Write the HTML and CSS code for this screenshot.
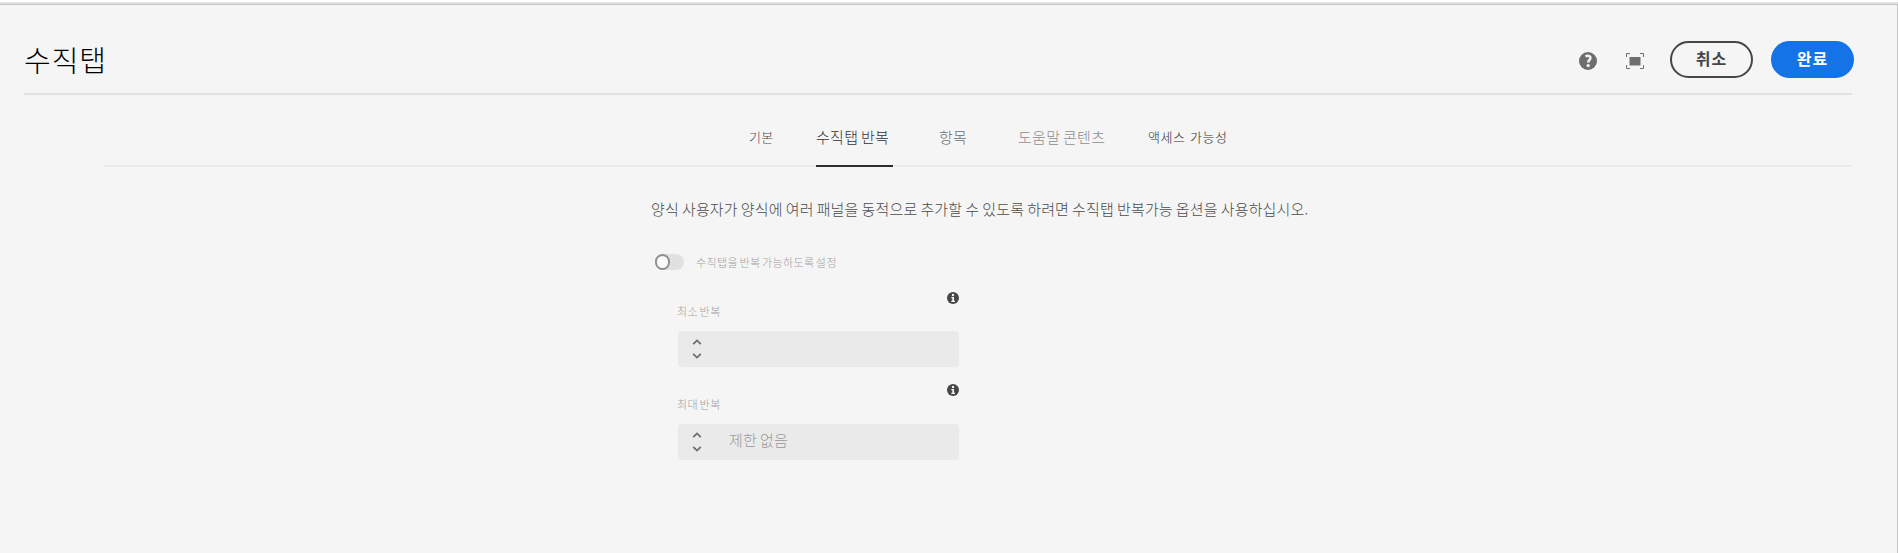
FILE: index.html
```html
<!DOCTYPE html>
<html lang="ko">
<head>
<meta charset="utf-8">
<title>수직탭</title>
<link rel="stylesheet" href="styles.css">
</head>
<body>
<main class="panel">
  <header class="header">
    <h1 class="title">수직탭</h1>
    <div class="actions">
      <svg class="help" width="18" height="18" viewBox="0 0 18 18"><circle cx="9" cy="9" r="9" fill="#6e6e6e"/><path d="M6.500 4.500C8.500 3.200 11.600 3.600 11.400 6.200C11.200 7.900 9.200 8.200 9.200 10.500" fill="none" stroke="#f5f5f5" stroke-width="2.500"/><circle cx="9.200" cy="13.600" r="1.700" fill="#f5f5f5"/></svg>
      <svg class="fullscreen" width="18" height="16" viewBox="0 0 18 16"><rect x="3.500" y="4" width="11" height="8.500" fill="#6e6e6e"/><path d="M.5 4V.5H4M14 .5h3.500V4M.5 12v3.500H4M14 15.500h3.500V12" fill="none" stroke="#6e6e6e"/></svg>
      <button class="button cancel">취소</button>
      <button class="button done">완료</button>
    </div>
  </header>
  <nav class="tabs">
    <a class="tab tab-basic">기본</a>
    <a class="tab tab-repeat">수직탭 반복</a>
    <a class="tab tab-items">항목</a>
    <a class="tab tab-help">도움말 콘텐츠</a>
    <a class="tab tab-access">액세스 가능성</a>
  </nav>
  <section class="content">
    <p class="description">양식 사용자가 양식에 여러 패널을 동적으로 추가할 수 있도록 하려면 수직탭 반복가능 옵션을 사용하십시오.</p>
    <div class="toggle-row"><span class="switch"><span class="knob"></span></span><span class="toggle-label">수직탭을 반복 가능하도록 설정</span></div>
    <div class="field">
      <div class="field-head"><label class="label">최소 반복</label>
        <svg class="info" width="12" height="12" viewBox="0 0 12 12"><circle cx="6" cy="6" r="6" fill="#464646"/><circle cx="6" cy="3" r="1.200" fill="#f5f5f5"/><path d="M4.300 5h2.700v3.700h1v1.200H4.300V8.700h1V6.200h-1z" fill="#f5f5f5"/></svg></div>
      <div class="stepper"><svg width="10" height="20" viewBox="0 0 10 20"><path d="M1.200 5.200L5 1.400l3.800 3.800M1.200 14.800L5 18.600l3.800-3.800" fill="none" stroke="#6e6e6e" stroke-width="1.800"/></svg></div>
    </div>
    <div class="field field-max">
      <div class="field-head"><label class="label">최대 반복</label>
        <svg class="info" width="12" height="12" viewBox="0 0 12 12"><circle cx="6" cy="6" r="6" fill="#464646"/><circle cx="6" cy="3" r="1.200" fill="#f5f5f5"/><path d="M4.300 5h2.700v3.700h1v1.200H4.300V8.700h1V6.200h-1z" fill="#f5f5f5"/></svg></div>
      <div class="stepper"><svg width="10" height="20" viewBox="0 0 10 20"><path d="M1.200 5.200L5 1.400l3.800 3.800M1.200 14.800L5 18.600l3.800-3.800" fill="none" stroke="#6e6e6e" stroke-width="1.800"/></svg><span class="placeholder">제한 없음</span></div>
    </div>
  </section>
</main>
</body>
</html>
```

FILE: styles.css
```css
* { box-sizing: border-box; }
body {
  margin: 0;
  padding-top: 2px;
  height: 553px;
  overflow: hidden;
  background: #fff;
  font-family: "Noto Sans CJK KR", sans-serif;
  font-weight: 300;
  color: #4b4b4b;
}
.panel {
  height: 551px;
  background: #f5f5f5;
  border-top: 2px solid #e1e1e1;
  box-shadow: inset 0 1px #c4c4c4, inset -1px 0 #c4c4c4;
}
.header {
  display: flex;
  justify-content: space-between;
  margin: 0 46px 0 24px;
  height: 91px;
  border-bottom: 2px solid #e1e1e1;
}
.title {
  margin: 35px 0 0;
  font-size: 29px;
  line-height: 40px;
  font-weight: 200;
  letter-spacing: 1px;
  color: #000;
}
.actions { display: flex; margin-right: -2px; }
.help { margin: 48px 29px 0 0; }
.fullscreen { margin: 49px 26px 0 0; }
.button {
  width: 83px;
  height: 37px;
  margin-top: 37px;
  padding: 0 0 3px;
  border-radius: 19px;
  border: 2px solid #464646;
  background: transparent;
  color: #464646;
  font: 700 16px/30px "Noto Sans CJK KR", sans-serif;
  letter-spacing: 1px;
}
.cancel { margin-right: 18px; }
.done { background: #1473e6; border-color: #1473e6; color: #fff; }
.tabs {
  display: flex;
  margin: 0 46px 0 103px;
  padding-left: 647px;
  height: 72px;
  border-bottom: 2px solid #ebebeb;
  font-size: 15px;
  line-height: 22px;
  white-space: nowrap;
}
.tab { height: 72px; padding-top: 31px; }
.tab-basic { width: 66px; margin-left: -1px; margin-right: 1px; font-size: 13px; letter-spacing: .4px; }
.tab-repeat {
  width: 77px;
  margin-right: 46px;
  border-bottom: 2px solid #2c2c2c;
  color: #323232;
  letter-spacing: .3px;
  word-spacing: -1.8px;
}
.tab-items { width: 79px; color: #6e6e6e; letter-spacing: .3px; }
.tab-help { width: 130px; color: #8e8e8e; letter-spacing: .3px; word-spacing: -1.8px; }
.tab-access { font-size: 13px; letter-spacing: .6px; color: #323232; }
.content { padding-left: 651px; }
.description {
  margin: 30px 0 0;
  font-size: 15px;
  font-weight: 200;
  line-height: 24px;
  letter-spacing: .15px;
  word-spacing: -1.3px;
  white-space: nowrap;
}
.toggle-row {
  display: flex;
  align-items: center;
  margin: 33px 0 0 4px;
  height: 16px;
}
.switch { width: 29px; height: 16px; border-radius: 8px; background: #e1e1e1; }
.knob {
  display: block;
  width: 15px;
  height: 16px;
  border: 2px solid #909090;
  border-radius: 8px;
  background: #fafafa;
}
.toggle-label {
  margin-left: 12px;
  font-size: 11px;
  letter-spacing: .4px;
  word-spacing: -2.1px;
  color: #a0a0a0;
}
.field { width: 281px; margin: 22px 0 0 27px; }
.field-max { margin-top: 17px; }
.field-head { display: flex; justify-content: space-between; height: 39px; }
.field-max .field-head { height: 40px; }
.label {
  margin: 11px 0 0 -1px;
  font-size: 11px;
  line-height: 16px;
  letter-spacing: .4px;
  word-spacing: -1.9px;
  color: #a0a0a0;
}
.field-max .label { margin-top: 12px; }
.stepper {
  display: flex;
  align-items: center;
  height: 36px;
  padding-left: 14px;
  border-radius: 4px;
  background: #eaeaea;
}
.placeholder {
  margin: -5px 0 0 27px;
  font-size: 15px;
  letter-spacing: .3px;
  word-spacing: -1.8px;
  color: #999;
}
```
